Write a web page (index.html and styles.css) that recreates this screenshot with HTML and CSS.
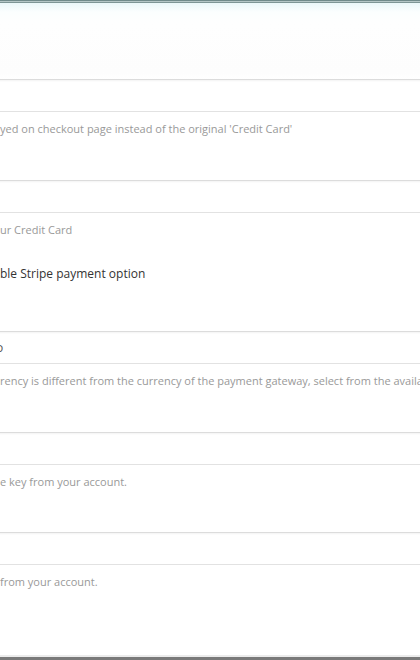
FILE: index.html
```html
<!DOCTYPE html>
<html lang="en">
<head>
    <meta charset="UTF-8">
    <meta name="viewport" content="width=device-width, initial-scale=1.0">
    <title>Stripe Settings</title>
    <link rel="stylesheet" href="styles.css">
</head>
<body>
    <div class="frame-top"></div>
    <div class="settings">
        <div class="first-row"></div>

        <div class="field">
            <div class="input"></div>
            <p class="desc">yed on checkout page instead of the original 'Credit Card'</p>
        </div>

        <div class="field">
            <div class="input"></div>
            <p class="desc">ur Credit Card</p>
            <label class="check">ble Stripe payment option</label>
        </div>

        <div class="field">
            <div class="input select"><span class="value">o</span></div>
            <p class="desc">rency is different from the currency of the payment gateway, select from the available currencies</p>
        </div>

        <div class="field">
            <div class="input"></div>
            <p class="desc">e key from your account.</p>
        </div>

        <div class="field field-last">
            <div class="input"></div>
            <p class="desc">from your account.</p>
        </div>
    </div>
    <div class="frame-bottom"></div>
</body>
</html>
```

FILE: styles.css
```css
html, body
{
    margin: 0;
    padding: 0;
}
body
{
    width: 420px;
    height: 660px;
    overflow: hidden;
    background: #fff;
    font-family: "Open Sans", Arial, sans-serif;
    display: flex;
    flex-direction: column;
}
.frame-top
{
    height: 3px;
    background: linear-gradient(#6f8a8a 0, #6f8a8a 1px, #b4c6c6 1px, #b4c6c6 2px, #7d9595 2px);
}
.settings
{
    flex: 1;
    overflow: hidden;
    background: linear-gradient(#eaf7f9 0, #fbfefe 9px, #fefefe 20px, #fdfdfd 70px, #fff 76px);
}
.first-row
{
    height: 76px;
}
.field
{
    padding-bottom: 43px;
}
.field:nth-child(5)
{
    padding-bottom: 42px;
}
.input
{
    height: 31px;
    margin-left: -10px;
    width: 460px;
    border-top: 1px solid #dcdcdc;
    border-bottom: 1px solid #e2e2e2;
    box-shadow: inset 0 1px 2px rgba(0,0,0,0.05);
    background: #fff;
}
.select .value
{
    display: inline-block;
    margin-left: 6px;
    line-height: 31px;
    font-size: 12px;
    color: #555;
}
.desc
{
    margin: 8px 0 0;
    font-size: 11px;
    line-height: 17px;
    color: #999;
    white-space: nowrap;
}
.check
{
    display: block;
    margin-top: 27px;
    font-size: 12px;
    line-height: 18px;
    color: #333;
    margin-bottom: 5px;
}
.frame-bottom
{
    height: 5px;
    background: linear-gradient(#ececec 0, #ececec 2px, #7a7a7a 2px);
}
```
